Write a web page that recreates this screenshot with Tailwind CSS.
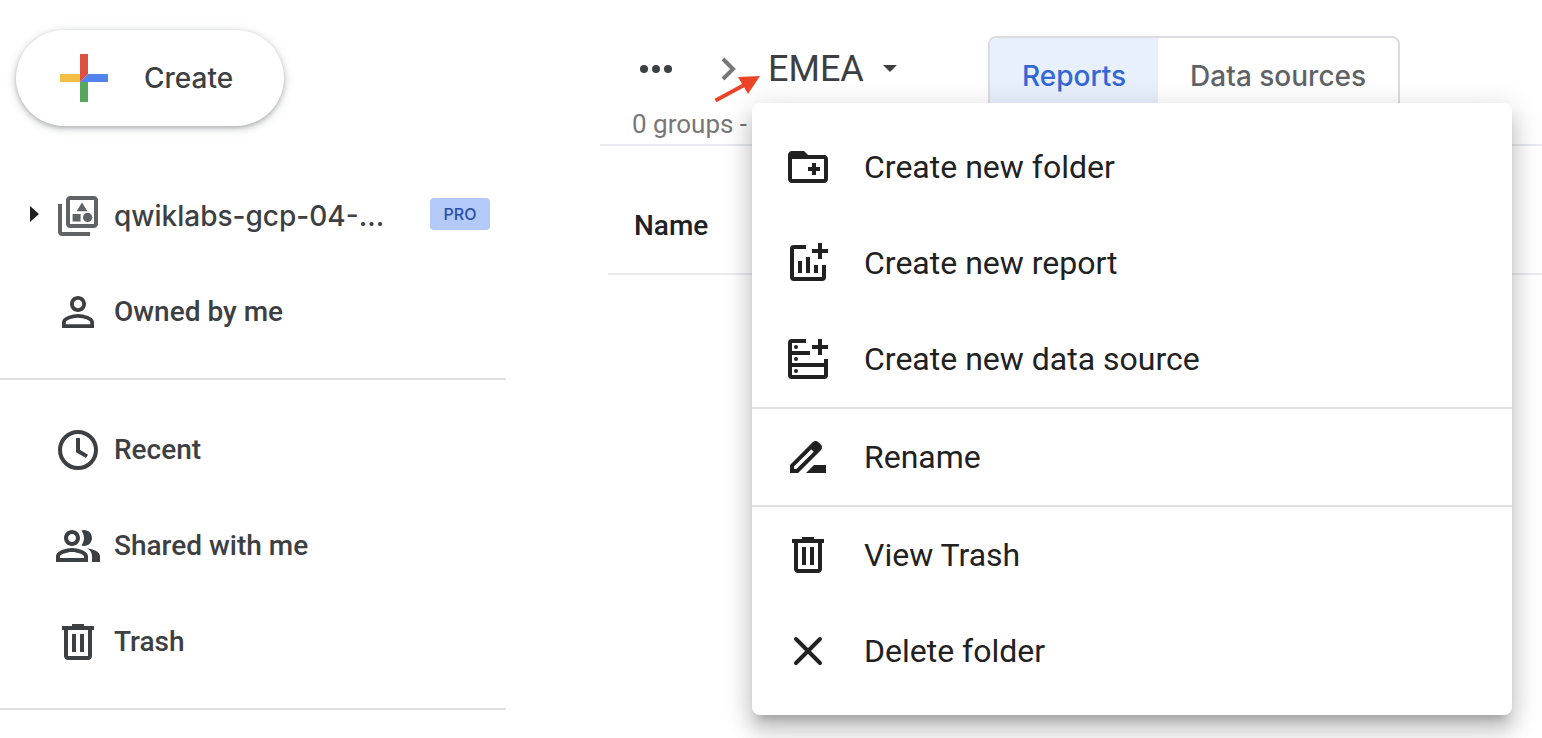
<!DOCTYPE html>
<html lang="en">
<head>
    <meta charset="UTF-8">
    <meta name="viewport" content="width=device-width, initial-scale=1.0">
    <title>EMEA - Reports</title>
    <script src="https://cdn.jsdelivr.net/npm/@tailwindcss/browser@4"></script>
</head>
<body class="bg-white font-[Roboto,sans-serif] text-[#3c4043]">
    <div class="flex min-h-screen">

        <!-- Sidebar -->
        <aside class="w-[506px] shrink-0 pt-[30px]">
            <button class="ml-4 flex h-24 w-[268px] items-center gap-9 rounded-full bg-white pl-11 font-[Inter,sans-serif] text-[28px] font-medium shadow-[0_2px_4px_rgba(60,64,67,0.3),0_2px_8px_2px_rgba(60,64,67,0.15)]">
                <svg class="size-12" viewBox="0 0 48 48" aria-hidden="true">
                    <path fill="#f2bf42" d="M0 20h20v8H0z"/>
                    <path fill="#5383ec" d="M28 20h20v8H20z"/>
                    <path fill="#58a55c" d="M20 28h8v20h-8z"/>
                    <path fill="#d95140" d="M20 0h8v20l-8 8z"/>
                </svg>
                Create
            </button>

            <nav class="mt-[42px] text-[28px] font-medium">
                <div class="border-b-2 border-[#dfe0e2] pb-[18px]">
                    <a href="#" class="flex h-24 items-center pr-4 pl-[30px]">
                        <svg class="mb-1 h-4 w-6" viewBox="0 0 24 16" fill="#202124" aria-hidden="true"><path d="M0 0l9 8-9 8z"/></svg>
                        <svg class="size-12" viewBox="0 0 24 24" fill="#5f6368" aria-hidden="true">
                            <path d="M20 2H8c-1.100 0-2 .9-2 2v12c0 1.100.9 2 2 2h12c1.100 0 2-.9 2-2V4c0-1.100-.9-2-2-2zm0 14H8V4h12v12zM4 6H2v14c0 1.100.9 2 2 2h14v-2H4V6z"/>
                            <path d="M14 5.200l2.700 4.400h-5.400zM9.300 11h4v3.800h-4z"/>
                            <circle cx="16.800" cy="12.700" r="2.300"/>
                        </svg>
                        <span class="ml-3 font-[Inter,sans-serif] text-[28px]">qwiklabs-gcp-04-...</span>
                        <span class="mb-1 ml-auto flex h-8 w-[60px] items-center justify-center rounded-sm bg-[#b3c9f7] font-[Inter,sans-serif] text-[16px] text-[#284ea8]">PRO</span>
                    </a>
                    <a href="#" class="flex h-24 items-center gap-3 pl-[54px]">
                        <svg class="size-12" viewBox="0 0 24 24" fill="currentColor" aria-hidden="true"><path d="M12 5.900c1.160 0 2.100.94 2.100 2.100s-.94 2.100-2.100 2.100S9.900 9.160 9.900 8s.94-2.100 2.100-2.100m0 9c2.970 0 6.100 1.460 6.100 2.100v1.100H5.900V17c0-.64 3.130-2.100 6.100-2.100M12 4C9.790 4 8 5.790 8 8s1.790 4 4 4 4-1.790 4-4-1.790-4-4-4zm0 9c-2.670 0-8 1.340-8 4v3h16v-3c0-2.660-5.330-4-8-4z"/></svg>
                        Owned by me
                    </a>
                </div>
                <div class="border-b-2 border-[#dfe0e2] pt-[22px] pb-[18px]">
                    <a href="#" class="flex h-24 items-center gap-3 pl-[54px]">
                        <svg class="size-12" viewBox="0 0 24 24" fill="none" stroke="currentColor" stroke-width="2" aria-hidden="true"><circle cx="12" cy="12" r="9"/><path d="M12 6v6.500l4.500 2.700"/></svg>
                        Recent
                    </a>
                    <a href="#" class="flex h-24 items-center gap-3 pl-[54px]">
                        <svg class="size-12" viewBox="0 0 24 24" fill="currentColor" aria-hidden="true"><path d="M16.670 13.130C18.040 14.060 19 15.320 19 17v3h4v-3c0-2.180-3.570-3.470-6.330-3.870zM15 12c2.210 0 4-1.790 4-4s-1.790-4-4-4c-.47 0-.91.1-1.330.24C14.500 5.270 15 6.580 15 8s-.5 2.730-1.330 3.760c.42.14.86.24 1.330.24zM9 12c2.210 0 4-1.790 4-4s-1.790-4-4-4-4 1.790-4 4 1.790 4 4 4zm0-6c1.100 0 2 .9 2 2s-.9 2-2 2-2-.9-2-2 .9-2 2-2zM9 13c-2.670 0-8 1.340-8 4v3h16v-3c0-2.660-5.330-4-8-4zm6 5H3v-.99C3.200 16.290 6.300 15 9 15s5.800 1.290 6 2v1z"/></svg>
                        Shared with me
                    </a>
                    <a href="#" class="flex h-24 items-center gap-3 pl-[54px]">
                        <svg class="size-12" viewBox="0 0 24 24" fill="currentColor" aria-hidden="true"><path d="M15 4V3H9v1H4v2h1v13c0 1.100.9 2 2 2h10c1.100 0 2-.9 2-2V6h1V4h-5zm2 15H7V6h10v13zM9 8h2v9H9zm4 0h2v9h-2z"/></svg>
                        Trash
                    </a>
                </div>
            </nav>
        </aside>

        <!-- Content -->
        <main class="relative ml-[94px] min-w-0 flex-1">
            <header class="flex h-[146px] items-start border-b-2 border-[#e8eaed] pt-9">
                <div class="w-[388px] shrink-0">
                    <div class="flex h-[66px] items-center pl-10">
                        <button aria-label="Show path"><svg class="h-2 w-8" viewBox="0 0 32 8" fill="currentColor"><circle cx="4" cy="4" r="4"/><circle cx="16" cy="4" r="4"/><circle cx="28" cy="4" r="4"/></svg></button>
                        <svg class="ml-12 h-6 w-4" viewBox="0 0 16 24" fill="none" stroke="#777" stroke-width="4" aria-hidden="true"><path d="M3 2l10 10L3 22"/></svg>
                        <button class="ml-8 flex items-center gap-[18px] text-[36px]">
                            EMEA
                            <svg class="h-2 w-4" viewBox="0 0 16 8" fill="currentColor" aria-hidden="true"><path d="M1 0h14L8 7z"/></svg>
                        </button>
                    </div>
                    <p class="pl-8 text-[26px] leading-[44px] text-[#777]">0 groups - 0 reports</p>
                </div>
                <div class="flex h-20 overflow-hidden rounded-lg border-2 border-[#dadce0] font-[Inter,sans-serif] text-[28px] font-medium">
                    <button class="bg-[#e8f0fe] px-8 text-[#3367d6]">Reports</button>
                    <button class="px-8 text-[#5f6368]">Data sources</button>
                </div>
            </header>

            <div class="pl-2">
                <table class="w-full">
                    <thead>
                        <tr class="h-32 border-b-2 border-[#e8eaed]">
                            <th class="pt-8 pl-[26px] text-left text-[28px] font-medium text-[#202124]">Name</th>
                        </tr>
                    </thead>
                </table>
            </div>

            <!-- Folder menu -->
            <div class="absolute top-[103px] right-[30px] left-[152px] rounded-lg bg-white py-4 text-[32px] text-[#212121] shadow-[0_10px_10px_-6px_rgba(0,0,0,0.2),0_16px_20px_2px_rgba(0,0,0,0.14),0_6px_28px_4px_rgba(0,0,0,0.12)]" role="menu">
                <button class="flex h-24 w-full items-center gap-8 pl-8" role="menuitem">
                    <svg class="size-12" viewBox="0 0 24 24" fill="currentColor" aria-hidden="true"><path d="M20 6h-8l-2-2H4c-1.100 0-2 .9-2 2v12c0 1.100.9 2 2 2h16c1.100 0 2-.9 2-2V8c0-1.100-.9-2-2-2zm0 12H4V8h16v10zM14 16h2v-2h2v-2h-2v-2h-2v2h-2v2h2z"/></svg>
                    Create new folder
                </button>
                <button class="flex h-24 w-full items-center gap-8 pl-8" role="menuitem">
                    <svg class="size-12" viewBox="0 0 24 24" fill="none" stroke="currentColor" stroke-width="2" aria-hidden="true"><path d="M11 4H5a1 1 0 0 0-1 1v14a1 1 0 0 0 1 1h14a1 1 0 0 0 1-1v-6M18 2v8M14 6h8M8 11v6M12 9v8M16 13v4"/></svg>
                    Create new report
                </button>
                <button class="flex h-24 w-full items-center gap-8 pl-8" role="menuitem">
                    <svg class="size-12" viewBox="0 0 24 24" fill="none" stroke="currentColor" stroke-width="2" aria-hidden="true"><path d="M11 3H4a1 1 0 0 0-1 1v16a1 1 0 0 0 1 1h16a1 1 0 0 0 1-1v-8M3 9h10M3 15h18M18 2v8M14 6h8"/><g fill="currentColor" stroke="none"><circle cx="6" cy="6" r="1"/><circle cx="6" cy="12" r="1"/><circle cx="6" cy="18" r="1"/></g></svg>
                    Create new data source
                </button>
                <hr class="border-t-2 border-[#e0e0e0]">
                <button class="flex h-24 w-full items-center gap-8 pl-8" role="menuitem">
                    <svg class="size-12" viewBox="0 0 24 24" fill="currentColor" aria-hidden="true"><path d="M18.410 5.800L17.200 4.590c-.78-.78-2.050-.78-2.830 0l-2.680 2.680L3 15.960V20h4.040l8.740-8.740 2.630-2.630c.79-.78.79-2.050 0-2.830zM6.210 18H5v-1.210l8.660-8.660 1.210 1.210L6.210 18zM11 20l4-4h6v4H11z"/></svg>
                    Rename
                </button>
                <hr class="border-t-2 border-[#e0e0e0]">
                <button class="flex h-24 w-full items-center gap-8 pl-8" role="menuitem">
                    <svg class="size-12" viewBox="0 0 24 24" fill="currentColor" aria-hidden="true"><path d="M15 4V3H9v1H4v2h1v13c0 1.100.9 2 2 2h10c1.100 0 2-.9 2-2V6h1V4h-5zm2 15H7V6h10v13zM9 8h2v9H9zm4 0h2v9h-2z"/></svg>
                    View Trash
                </button>
                <button class="flex h-24 w-full items-center gap-8 pl-8" role="menuitem">
                    <svg class="size-12" viewBox="0 0 24 24" fill="none" stroke="currentColor" stroke-width="2" stroke-linecap="round" aria-hidden="true"><path d="M6 6l12 12M18 6L6 18"/></svg>
                    Delete folder
                </button>
            </div>

            <!-- Pointer arrow -->
            <svg class="absolute top-[74px] left-[114px] h-7 w-[46px]" viewBox="0 0 46 28" aria-hidden="true">
                <path d="M1.500 26.500L32 10" stroke="#ec4427" stroke-width="4"/>
                <path d="M46 2L34 20 24 3z" fill="#ec4427"/>
            </svg>
        </main>
    </div>
</body>
</html>
